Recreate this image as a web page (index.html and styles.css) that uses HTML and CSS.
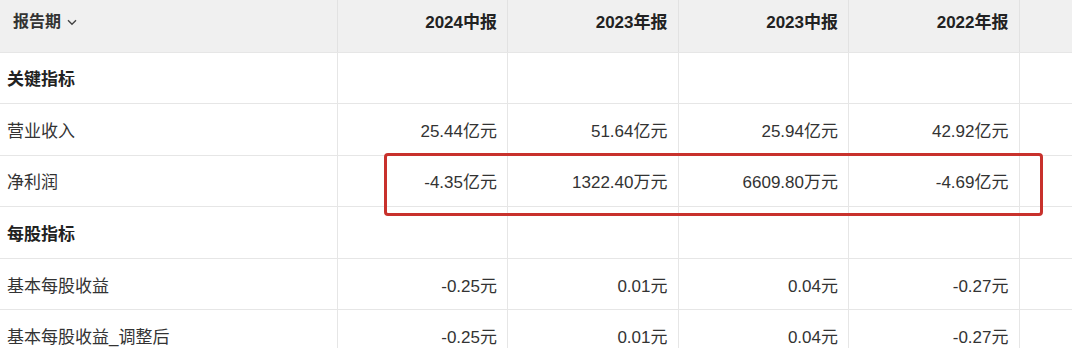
FILE: index.html
```html
<!DOCTYPE html>
<html lang="zh-CN">
<head>
<meta charset="utf-8">
<link rel="stylesheet" href="styles.css">
</head>
<body>
<div class="wrap">
  <table class="fin">
    <colgroup>
      <col class="c-label"><col class="c-val"><col class="c-val"><col class="c-val"><col class="c-val"><col class="c-extra">
    </colgroup>
    <thead>
      <tr>
        <th class="lbl">报告期<svg class="chev" width="10" height="7" viewBox="0 0 10 7"><path d="M1 1.2 L5 5.2 L9 1.2" fill="none" stroke="#444" stroke-width="1.4"/></svg></th>
        <th>2024中报</th>
        <th>2023年报</th>
        <th>2023中报</th>
        <th>2022年报</th>
        <th></th>
      </tr>
    </thead>
    <tbody>
      <tr class="sec"><td>关键指标</td><td></td><td></td><td></td><td></td><td></td></tr>
      <tr><td>营业收入</td><td>25.44亿元</td><td>51.64亿元</td><td>25.94亿元</td><td>42.92亿元</td><td></td></tr>
      <tr><td>净利润</td><td>-4.35亿元</td><td>1322.40万元</td><td>6609.80万元</td><td>-4.69亿元</td><td></td></tr>
      <tr class="sec"><td>每股指标</td><td></td><td></td><td></td><td></td><td></td></tr>
      <tr><td>基本每股收益</td><td>-0.25元</td><td>0.01元</td><td>0.04元</td><td>-0.27元</td><td></td></tr>
      <tr><td>基本每股收益_调整后</td><td>-0.25元</td><td>0.01元</td><td>0.04元</td><td>-0.27元</td><td></td></tr>
    </tbody>
  </table>
  <div class="highlight"></div>
</div>
</body>
</html>
```

FILE: styles.css
```css
html, body {
  margin: 0;
  padding: 0;
  background: #fff;
  overflow: hidden;
}
body {
  font-family: "Liberation Sans", "Noto Sans CJK SC", sans-serif;
  color: #333;
}
.wrap {
  position: relative;
  width: 1072px;
  height: 348px;
  overflow: hidden;
}
.fin {
  border-collapse: collapse;
  table-layout: fixed;
  width: 1100px;
  font-size: 17px;
}
.c-label { width: 337px; }
.c-val { width: 170.5px; }
.c-extra { width: 81px; }

.fin th, .fin td {
  border-right: 1px solid #e6e6e6;
  border-bottom: 1px solid #e6e6e6;
  padding: 0 10px 0 7px;
  text-align: right;
  white-space: nowrap;
  vertical-align: middle;
}
.fin th:first-child, .fin td:first-child {
  text-align: left;
}
.fin thead tr { height: 52px; }
.fin tbody tr { height: 51.6px; }

.fin th {
  background: #f0f0f0;
  color: #222;
  font-weight: bold;
  padding-bottom: 11px;
  border-right-color: #e2e2e2;
}
.fin th.lbl {
  padding-left: 13px;
  font-size: 16px;
  color: #333;
}
.chev {
  margin-left: 6px;
  vertical-align: middle;
  position: relative;
  top: -1px;
}
.fin td { color: #333; }
.fin tr.sec td:first-child {
  font-weight: bold;
  color: #222;
}
.highlight {
  position: absolute;
  left: 384px;
  top: 153px;
  width: 653px;
  height: 57px;
  border: 3px solid #c8312c;
  border-radius: 4px;
}
```
